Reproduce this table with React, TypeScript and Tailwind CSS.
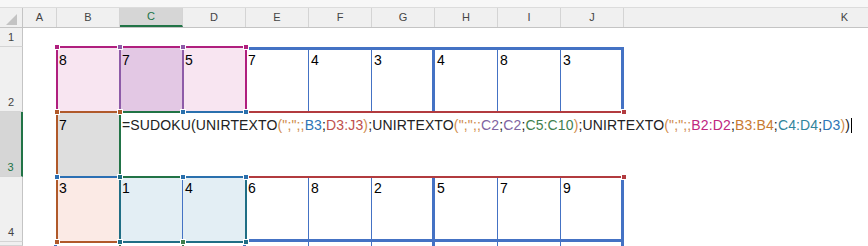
import React from "react";

const COLS = ["A", "B", "C", "D", "E", "F", "G", "H", "I", "J", "K"];
const ROWS = [1, 2, 3, 4, 5];

const VALUES: Record<number, (string | null)[]> = {
  2: [null, "8", "7", "5", "7", "4", "3", "4", "8", "3"],
  3: [null, "7"],
  4: [null, "3", "1", "4", "6", "8", "2", "5", "7", "9"],
};

const FILLS: Record<string, string> = {
  B2: "bg-[#f8e5f1]",
  C2: "bg-[#e3c8e4]",
  D2: "bg-[#f8e5f1]",
  B3: "bg-[#dedede]",
  B4: "bg-[#fbeae5]",
  C4: "bg-[#e3eef4]",
  D4: "bg-[#e3eef4]",
};

const ROW_H: Record<number, string> = {
  1: "h-[19px]",
  2: "h-[65px]",
  3: "h-[65px]",
  4: "h-[65px]",
  5: "h-[4px]",
};

const ROW_PAD: Record<number, string> = {
  2: "pt-[2px]",
  3: "pt-[5px]",
  4: "pt-[3px]",
};

// references highlighted while the formula is being edited, in paint order
const REFS = [
  { ref: "C2", border: "border-[#8e5ba8]", fill: "bg-[#8e5ba8]" },
  { ref: "B2:D2", border: "border-[#b01f7e]", fill: "bg-[#b01f7e]" },
  { ref: "B3", border: "border-[#2b6fb3]", fill: "bg-[#2b6fb3]" },
  { ref: "B3:B4", border: "border-[#b0592a]", fill: "bg-[#b0592a]" },
  { ref: "C5:C10", border: "border-[#3f7d4c]", fill: "bg-[#3f7d4c]" },
  { ref: "C4:D4", border: "border-[#1f6e85]", fill: "bg-[#1f6e85]" },
  { ref: "D3:J3", border: "border-[#b23b3f]", fill: "bg-[#b23b3f]" },
  { ref: "D3", border: "border-[#2a70ad]", fill: "bg-[#2a70ad]" },
];

const TAN = "text-[#cf8c4c]";
const INK = "text-[#222]";

const FORMULA: [string, string][] = [
  ["=SUDOKU(UNIRTEXTO", INK],
  ['(";";;', TAN],
  ["B3", "text-[#2f75b5]"],
  [";", INK],
  ["D3:J3", "text-[#c0504d]"],
  [")", TAN],
  [";UNIRTEXTO", INK],
  ['(";";;', TAN],
  ["C2", "text-[#8064a2]"],
  [";", INK],
  ["C2", "text-[#8064a2]"],
  [";", INK],
  ["C5:C10", "text-[#3f7f4f]"],
  [")", TAN],
  [";UNIRTEXTO", INK],
  ['(";";;', TAN],
  ["B2:D2", "text-[#c0267f]"],
  [";", INK],
  ["B3:B4", "text-[#c87a32]"],
  [";", INK],
  ["C4:D4", "text-[#31859c]"],
  [";", INK],
  ["D3", "text-[#2e75b6]"],
  [")", TAN],
  [")", INK],
];

const colLeft = (c: number) => (c === 0 ? 23 : 57 + 63 * (c - 1));
const rowTop = (r: number) => (r === 1 ? 28 : 47 + 65 * (r - 2));

function parseRef(ref: string) {
  const [a, b = a] = ref.split(":");
  const cell = (s: string) => ({ c: s.charCodeAt(0) - 65, r: parseInt(s.slice(1), 10) });
  const p = cell(a);
  const q = cell(b);
  return { x1: colLeft(p.c), x2: colLeft(q.c + 1), y1: rowTop(p.r), y2: rowTop(q.r + 1) };
}

function colWidth(c: number) {
  if (c === 0) return "w-[34px]";
  if (c === 10) return "w-[442px]";
  return "w-[63px]";
}

// sudoku grid lines drawn on the cells themselves
function gridBorder(r: number, c: number) {
  if (r === 5 && c === 0) return "border-r-[3px] border-r-[#4472c4]";
  if (c < 1 || c > 9 || r < 2) return "";
  const right = c === 3 || c === 6 || c === 9 ? "border-r-[3px]" : "border-r";
  if (r === 2) {
    if (c <= 3) return "border-t-[3px] border-t-transparent";
    return `border-t-[3px] ${right} border-[#4472c4]`;
  }
  if (r === 3) return c <= 3 ? "" : `${right} border-[#4472c4]`;
  if (r === 4) {
    if (c === 2) return "border-b-[3px] border-b-transparent border-r border-r-[#4472c4]";
    if (c <= 3) return "border-b-[3px] border-b-transparent";
    return `border-b-[3px] ${right} border-[#4472c4]`;
  }
  return `${right} border-[#4472c4]`;
}

function Outline({ refName, border }: { refName: string; border: string }) {
  const { x1, x2, y1, y2 } = parseRef(refName);
  return (
    <div
      className={`absolute border-2 ${border}`}
      style={{ left: x1 - 1, top: y1 - 1, width: x2 - x1 + 2, height: y2 - y1 + 2 }}
    />
  );
}

function Handles({ refName, fill }: { refName: string; fill: string }) {
  const { x1, x2, y1, y2 } = parseRef(refName);
  const corners = [
    [x1, y1],
    [x2, y1],
    [x1, y2],
    [x2, y2],
  ];
  return (
    <>
      {corners.map(([x, y], i) => (
        <div
          key={i}
          className={`absolute w-[6px] h-[6px] border border-white ${fill}`}
          style={{ left: x - 3, top: y - 3 }}
        />
      ))}
    </>
  );
}

export default function App() {
  return (
    <div className="relative w-[868px] h-[246px] overflow-hidden bg-white font-['Liberation_Sans',Arial,sans-serif]">
      <div className="h-[8px] bg-[#f7f7f7] border-b border-[#dcdcdc]" />

      {/* column headers */}
      <div className="flex h-[20px] bg-[#f0f0f0] border-b border-[#c4c4c4] text-[11px] text-[#444]">
        <div className="w-[23px] shrink-0 border-r border-[#c4c4c4] flex items-end justify-end pr-[5px] pb-[2px]">
          <svg width="11" height="11" viewBox="0 0 11 11">
            <polygon points="11,0 11,11 0,11" fill="#c3c3c3" />
          </svg>
        </div>
        {COLS.map((name, c) => (
          <div
            key={name}
            className={`${colWidth(c)} shrink-0 flex items-center justify-center border-r border-[#d4d4d4] ${
              name === "C" ? "bg-[#d6d6d6] text-[#217346] border-b-2 border-b-[#217346]" : ""
            }`}
          >
            {name}
          </div>
        ))}
      </div>

      {/* rows */}
      {ROWS.map((r) => (
        <div key={r} className={`flex ${ROW_H[r]}`}>
          <div
            className={`w-[23px] shrink-0 flex items-end justify-center pb-[1px] text-[11px] border-b border-b-[#d4d4d4] ${
              r === 3
                ? "bg-[#d6d6d6] text-[#217346] border-r-2 border-r-[#217346]"
                : "bg-[#f0f0f0] text-[#444] border-r border-r-[#c4c4c4]"
            }`}
          >
            {r < 5 ? r : ""}
          </div>
          {COLS.map((name, c) => (
            <div
              key={name}
              className={`${colWidth(c)} shrink-0 pl-[2px] text-[14px] leading-[17px] text-black ${ROW_PAD[r] ?? ""} ${
                FILLS[`${name}${r}`] ?? ""
              } ${gridBorder(r, c)}`}
            >
              {VALUES[r]?.[c] ?? ""}
            </div>
          ))}
        </div>
      ))}

      {/* reference outlines */}
      {REFS.map((x) => (
        <Outline key={x.ref} refName={x.ref} border={x.border} />
      ))}
      <Outline refName="C3" border="border-[#217346]" />

      {/* in-cell editor */}
      <div className="absolute left-[121px] top-[113px] w-[728px] h-[63px] bg-white pl-[1px] pt-[4px] text-[14px] leading-[17px] tracking-[0.14px] whitespace-nowrap">
        {FORMULA.map(([t, color], i) => (
          <span key={i} className={color}>
            {t}
          </span>
        ))}
        <span className="inline-block w-px h-[15px] bg-black align-[-3px] ml-[1px]" />
      </div>

      {REFS.map((x) => (
        <Handles key={x.ref} refName={x.ref} fill={x.fill} />
      ))}
    </div>
  );
}
